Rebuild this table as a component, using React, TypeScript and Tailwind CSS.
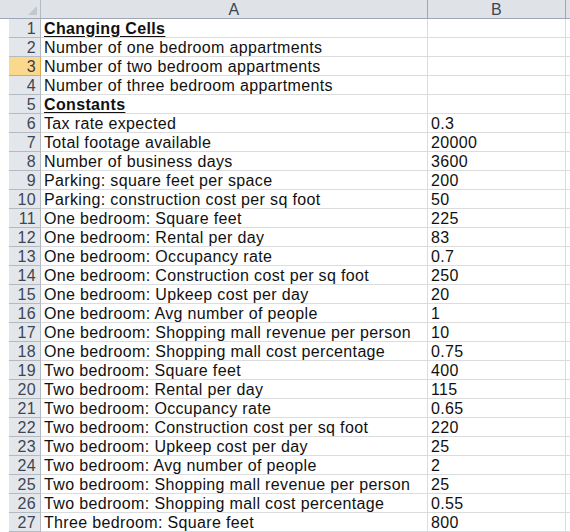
const rows: [string, string][] = [
  ["Changing Cells", ""],
  ["Number of one bedroom appartments", ""],
  ["Number of two bedroom appartments", ""],
  ["Number of three bedroom appartments", ""],
  ["Constants", ""],
  ["Tax rate expected", "0.3"],
  ["Total footage available", "20000"],
  ["Number of business days", "3600"],
  ["Parking: square feet per space", "200"],
  ["Parking: construction cost per sq foot", "50"],
  ["One bedroom: Square feet", "225"],
  ["One bedroom: Rental per day", "83"],
  ["One bedroom: Occupancy rate", "0.7"],
  ["One bedroom: Construction cost per sq foot", "250"],
  ["One bedroom: Upkeep cost per day", "20"],
  ["One bedroom: Avg number of people", "1"],
  ["One bedroom: Shopping mall revenue per person", "10"],
  ["One bedroom: Shopping mall cost percentage", "0.75"],
  ["Two bedroom: Square feet", "400"],
  ["Two bedroom: Rental per day", "115"],
  ["Two bedroom: Occupancy rate", "0.65"],
  ["Two bedroom: Construction cost per sq foot", "220"],
  ["Two bedroom: Upkeep cost per day", "25"],
  ["Two bedroom: Avg number of people", "2"],
  ["Two bedroom: Shopping mall revenue per person", "25"],
  ["Two bedroom: Shopping mall cost percentage", "0.55"],
  ["Three bedroom: Square feet", "800"],
]

const headings = [1, 5]

export default function App() {
  return (
    <div className="w-[570px] h-[532px] overflow-hidden bg-white text-[16px] tracking-[0.35px] leading-none text-[#111] font-['Liberation_Sans',Arial,sans-serif]">
      {/* column headers */}
      <div className="flex h-[19px] bg-[#dfe3e8] border-b border-[#9ea7b3]">
        <div className="relative w-[41px] shrink-0 border-r border-[#b4bac2]">
          <div className="absolute right-[3px] bottom-[3px] w-0 h-0 border-l-[9px] border-l-transparent border-b-[9px] border-b-[#c2c7cd]" />
        </div>
        <div className="w-[387px] shrink-0 border-r border-[#9ea7b3] flex items-center justify-center pt-[1px] text-[#3d4652]">A</div>
        <div className="w-[138px] shrink-0 border-r border-[#9ea7b3] flex items-center justify-center pt-[1px] text-[#3d4652]">B</div>
        <div className="flex-1" />
      </div>

      {rows.map(([label, value], i) => {
        const n = i + 1
        const selected = n === 3
        const heading = headings.includes(n)
        return (
          <div key={n} className="flex h-[19px]">
            <div className="w-[9px] shrink-0" />
            <div
              className={
                selected
                  ? "w-[32px] shrink-0 flex items-center justify-end pr-[4px] pt-[1px] bg-[#fad98e] border-b border-r border-[#e2a94a] text-[#3d3d3d]"
                  : "w-[32px] shrink-0 flex items-center justify-end pr-[4px] pt-[1px] bg-[#e3e7ec] border-b border-r border-[#b4bac2] text-[#3d4652]"
              }
            >
              {n}
            </div>
            <div className="w-[387px] shrink-0 flex items-center pl-[3px] pt-[1px] border-b border-r border-[#dadcdd] whitespace-nowrap">
              {heading ? <span className="font-bold underline underline-offset-2">{label}</span> : label}
            </div>
            <div className="w-[138px] shrink-0 flex items-center pl-[3px] pt-[1px] border-b border-r border-[#dadcdd]">
              {value}
            </div>
            <div className="flex-1 border-b border-[#dadcdd]" />
          </div>
        )
      })}
    </div>
  )
}
